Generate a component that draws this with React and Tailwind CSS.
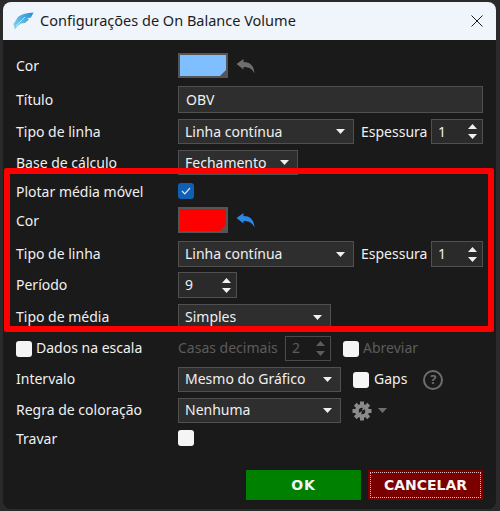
import React from "react";

const FONT = "[font-family:'Noto_Sans','Open_Sans',sans-serif]";
const LIFT = "pb-[2px]";

function Caret({ className = "" }) {
  return (
    <svg width="9" height="5" viewBox="0 0 9 5" className={className}>
      <path d="M0 0H9L4.5 5Z" fill="currentColor" />
    </svg>
  );
}

function Undo({ color }) {
  return (
    <svg width="20" height="16" viewBox="0 0 20 16">
      <path
        d="M0.5 6L7.5 1V4C13 4 18 6.5 18.5 15.5C16.5 11 13 9 7.5 9V11.5Z"
        fill={color}
      />
    </svg>
  );
}

function Gear() {
  const teeth = [0, 45, 90, 135, 180, 225, 270, 315];
  return (
    <svg width="20" height="20" viewBox="0 0 20 20" className="ml-[11px]">
      {teeth.map((a) => (
        <rect key={a} x="8" y="0.5" width="4" height="5" fill="#8a8a8a" transform={`rotate(${a} 10 10)`} />
      ))}
      <circle cx="10" cy="10" r="7" fill="#8a8a8a" />
      <circle cx="10" cy="10" r="3.2" fill="#1a1a1a" />
      <path d="M6 12.5L10 10L9 14Z" fill="#8a8a8a" />
      <path d="M14 7.5L10 10L11 6Z" fill="#8a8a8a" />
    </svg>
  );
}

function Label({ children, lift = false }) {
  return <div className={`w-[162px] shrink-0 text-[14px] text-[#f0f0f0] ${lift ? LIFT : ""}`}>{children}</div>;
}

function Select({ value, width, height = "h-[25px]", lift = false }) {
  return (
    <div className={`${width} ${height} flex items-center justify-between border border-[#505050] bg-[#2e2e2e] pl-[6px] pr-[8px] text-[14px] text-[#f0f0f0]`}>
      <span className={lift ? LIFT : ""}>{value}</span>
      <Caret className="text-[#f0f0f0]" />
    </div>
  );
}

function Spinner({ value, width, height = "h-[25px]", disabled = false, lift = false }) {
  return (
    <div className={`${width} ${height} flex items-center justify-between border pl-[6px] pr-[5px] text-[14px] ${disabled ? "border-[#4a4a4a] text-[#5c5c5c]" : "border-[#505050] bg-[#2a2a2a] text-[#f0f0f0]"}`}>
      <span className={lift ? LIFT : ""}>{value}</span>
      <span className={`flex flex-col gap-[5px] ${disabled ? "text-[#5c5c5c]" : "text-[#f0f0f0]"}`}>
        <Caret className="rotate-180" />
        <Caret />
      </span>
    </div>
  );
}

function Swatch({ color, height = "h-[25px]" }) {
  return (
    <div className={`relative ${height} w-[50px] border-2 border-[#555555] ${color}`}>
      <div className="absolute bottom-0 right-0 h-0 w-0 border-b-[6px] border-l-[6px] border-b-[#555555] border-l-transparent" />
    </div>
  );
}

function Box({ className = "" }) {
  return <div className={`h-[16px] w-[16px] rounded-[3px] bg-[#f5f5f5] ${className}`} />;
}

function Espessura({ height, lift = false }) {
  return (
    <>
      <span className={`ml-[7px] w-[70px] text-[14px] text-[#f0f0f0] ${lift ? LIFT : ""}`}>Espessura</span>
      <Spinner value="1" width="w-[52px]" height={height} lift={lift} />
    </>
  );
}

export default function App() {
  return (
    <div className={`h-[511px] w-[500px] overflow-hidden bg-[#2a2a2a] pl-[3px] pt-[2px] ${FONT}`}>
      <div className="relative h-[507px] w-[493px] overflow-hidden rounded-b-lg rounded-t-lg bg-[#1a1a1a]">
        <div className="flex h-[38px] items-center bg-[#f0f4fb] pl-[10px] pr-[13px] text-[#1c1c1c]">
          <svg width="24" height="20" viewBox="0 0 24 20" className="mr-[3px]">
            <defs>
              <linearGradient id="feather" x1="0" y1="1" x2="1" y2="0">
                <stop offset="0" stopColor="#8fd8ea" />
                <stop offset="1" stopColor="#1f8fd8" />
              </linearGradient>
            </defs>
            <path d="M0.5 13L5 6C9 3 14 2 20.5 1.5L18 6.5L14 7.5L16 8.5L12 12L8 12.5L4.5 15L2 18.5Z" fill="url(#feather)" />
            <path d="M3 15L12 6" stroke="#f0f4fb" strokeWidth="0.7" />
          </svg>
          <span className="text-[14.5px]">Configurações de On Balance Volume</span>
          <svg width="12" height="12" viewBox="0 0 12 12" className="ml-auto">
            <path d="M0.5 0.5L11.5 11.5M11.5 0.5L0.5 11.5" stroke="#1c1c1c" strokeWidth="1" fill="none" />
          </svg>
        </div>

        <div className="flex flex-col pl-[13px]">
          <div className="mt-[13px] flex items-center">
            <Label>Cor</Label>
            <Swatch color="bg-[#80bfff]" />
            <span className="ml-[8px]"><Undo color="#6e6e6e" /></span>
          </div>
          <div className="mt-[8px] flex items-center">
            <Label>Título</Label>
            <div className="flex h-[27px] w-[305px] items-center border border-[#505050] bg-[#2e2e2e] pl-[7px] text-[14px] text-[#f0f0f0]">OBV</div>
          </div>
          <div className="mt-[6px] flex items-center">
            <Label>Tipo de linha</Label>
            <Select value="Linha contínua" width="w-[176px]" />
            <Espessura />
          </div>
          <div className="mt-[6px] flex items-center">
            <Label>Base de cálculo</Label>
            <Select value="Fechamento" width="w-[120px]" />
          </div>
          <div className="mt-[8px] flex h-[16px] items-center">
            <Label>Plotar média móvel</Label>
            <div className="flex h-[16px] w-[16px] items-center justify-center rounded-[3px] bg-[#0f5fb4]">
              <svg width="10" height="8" viewBox="0 0 10 8">
                <path d="M1 4L3.8 6.8L9 1" stroke="#d8e6f5" strokeWidth="1.2" fill="none" />
              </svg>
            </div>
          </div>
          <div className="mt-[8px] flex items-center">
            <Label>Cor</Label>
            <Swatch color="bg-[#ff0000]" height="h-[26px]" />
            <span className="ml-[8px]"><Undo color="#2f86e0" /></span>
          </div>
          <div className="mt-[8px] flex items-center">
            <Label lift>Tipo de linha</Label>
            <Select value="Linha contínua" width="w-[176px]" height="h-[26px]" lift />
            <Espessura height="h-[26px]" lift />
          </div>
          <div className="mt-[5px] flex items-center">
            <Label lift>Período</Label>
            <Spinner value="9" width="w-[59px]" height="h-[26px]" lift />
          </div>
          <div className="mt-[6px] flex items-center">
            <Label lift>Tipo de média</Label>
            <Select value="Simples" width="w-[153px]" height="h-[26px]" lift />
          </div>
          <div className="mt-[6px] flex items-center">
            <Box className="mr-[4px]" />
            <span className={`w-[142px] text-[14px] text-[#f0f0f0] ${LIFT}`}>Dados na escala</span>
            <span className={`w-[107px] text-[14px] text-[#5c5c5c] ${LIFT}`}>Casas decimais</span>
            <Spinner value="2" width="w-[46px]" disabled lift />
            <Box className="ml-[12px] mr-[4px]" />
            <span className={`text-[14px] text-[#5c5c5c] ${LIFT}`}>Abreviar</span>
          </div>
          <div className="mt-[6px] flex items-center">
            <Label lift>Intervalo</Label>
            <Select value="Mesmo do Gráfico" width="w-[163px]" lift />
            <Box className="ml-[12px] mr-[5px]" />
            <span className={`text-[14px] text-[#f0f0f0] ${LIFT}`}>Gaps</span>
            <span className="ml-[16px] flex h-[20px] w-[20px] items-center justify-center rounded-full border-2 border-[#6e6e6e] text-[13px] font-bold leading-none text-[#6e6e6e]">?</span>
          </div>
          <div className="mt-[6px] flex items-center">
            <Label lift>Regra de coloração</Label>
            <Select value="Nenhuma" width="w-[163px]" lift />
            <Gear />
            <Caret className="ml-[6px] text-[#6e6e6e]" />
          </div>
          <div className="mt-[7px] flex h-[16px] items-center">
            <Label>Travar</Label>
            <Box />
          </div>
          <div className="mt-[24px] flex gap-[7px] pl-[230px]">
            <button className="h-[30px] w-[115px] bg-[#008000] text-[14px] font-bold tracking-[1px] text-[#f5f5f5] [font-family:'DejaVu_Sans',sans-serif]">OK</button>
            <button className="flex h-[30px] w-[115px] items-center justify-center bg-[#7a0000] text-[14px] font-bold text-[#f5f5f5] outline-1 -outline-offset-3 outline-dotted outline-[#e0c0c0] [font-family:'DejaVu_Sans',sans-serif]">CANCELAR</button>
          </div>
        </div>

        <div className="absolute left-[1px] top-[166px] h-[164px] w-[490px] rounded-[2px] border-[6px] border-[#ff0000]" />
      </div>
    </div>
  );
}
